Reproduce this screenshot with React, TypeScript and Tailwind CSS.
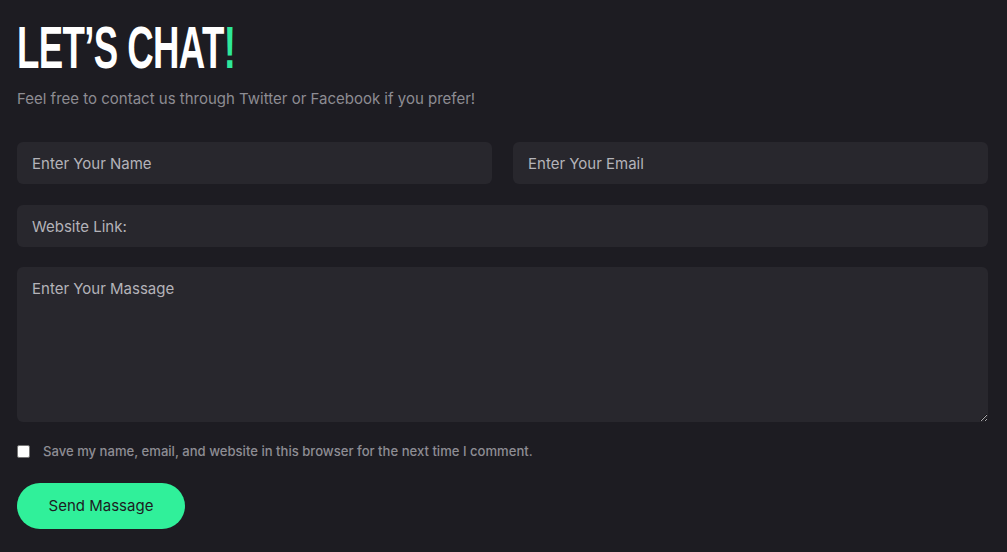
import React from 'react';

const App: React.FC = () => {
  return (
    <div className="min-h-[552px] w-full bg-[#1d1c22] pl-[17px] pr-[19px] pt-[18px] font-['Inter','Liberation_Sans',sans-serif]">
      <h1 className="origin-left scale-x-[0.61] whitespace-nowrap font-['Liberation_Sans',sans-serif] text-[60px] font-bold uppercase leading-[60px] tracking-[-1px] text-white">
        LET’S CHAT<span className="text-[#2ee89a]">!</span>
      </h1>
      <p className="mt-[11px] text-[15px] leading-[20px] text-[#8d8c93]">
        Feel free to contact us through Twitter or Facebook if you prefer!
      </p>

      <form className="mt-[33px] flex flex-col gap-[21px]" onSubmit={(e) => e.preventDefault()}>
        <div className="grid grid-cols-2 gap-[21px]">
          <input
            type="text"
            placeholder="Enter Your Name"
            className="h-[42px] rounded-[6px] bg-[#28272d] px-[15px] text-[15px] text-white outline-none placeholder:text-[#b4b3b9]"
          />
          <input
            type="email"
            placeholder="Enter Your Email"
            className="h-[42px] rounded-[6px] bg-[#28272d] px-[15px] text-[15px] text-white outline-none placeholder:text-[#b4b3b9]"
          />
        </div>
        <input
          type="text"
          placeholder="Website Link:"
          className="h-[42px] rounded-[6px] bg-[#28272d] px-[15px] text-[15px] text-white outline-none placeholder:text-[#b4b3b9]"
        />
        <textarea
          placeholder="Enter Your Massage"
          className="-mt-[1px] h-[155px] rounded-[6px] bg-[#28272d] px-[15px] py-[11px] text-[15px] text-white outline-none placeholder:text-[#b4b3b9]"
        />
      </form>

      <label className="mt-[21px] flex items-center gap-[13px]">
        <input type="checkbox" className="h-[13px] w-[13px] appearance-none rounded-[2px] border border-[#767676] bg-white" />
        <span className="text-[13.1px] font-medium leading-[16px] text-[#8e8d94]">
          Save my name, email, and website in this browser for the next time I comment.
        </span>
      </label>

      <button
        type="button"
        className="mt-[24px] h-[46px] w-[168px] rounded-full bg-[#30f09a] text-[15px] text-[#1d1c22]"
      >
        Send Massage
      </button>
    </div>
  );
};

export default App;
